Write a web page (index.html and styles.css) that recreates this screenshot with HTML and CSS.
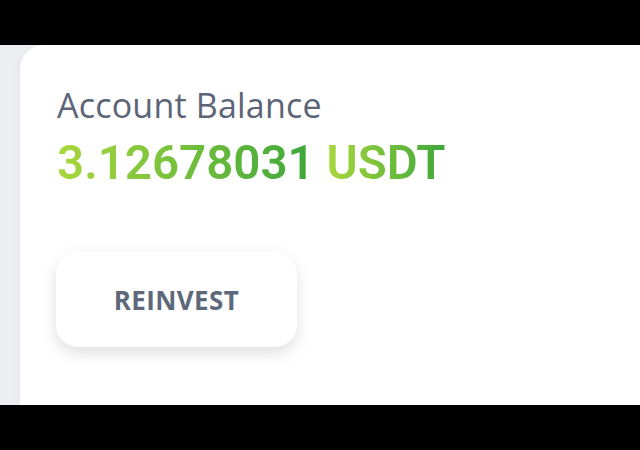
FILE: index.html
```html
<!DOCTYPE html>
<html lang="en">
<head>
    <meta charset="UTF-8">
    <meta name="viewport" content="width=device-width, initial-scale=1.0">
    <title>Account Balance</title>
    <link rel="stylesheet" href="styles.css">
</head>
<body>
    <div class="screen">
        <div class="card">
            <div class="balance-label">Account Balance</div>
            <div class="balance-value">
                <span class="grad">3.12678031</span> <span class="grad">USDT</span>
            </div>
            <button class="reinvest-btn">REINVEST</button>
        </div>
    </div>
</body>
</html>
```

FILE: styles.css
```css
body {
    margin: 0;
    padding: 45px 0;
    background-color: #000;
    font-family: 'Open Sans', sans-serif;
}
.screen {
    height: 360px;
    background: linear-gradient(90deg, #eceef1, #f4f5f7);
    padding-left: 20px;
    overflow: hidden;
}
.card {
    height: 100%;
    background: white;
    border-radius: 24px 0 0 0;
    box-shadow: -2px 0 8px rgba(0, 0, 0, 0.03);
    padding: 40px 0 0 37px;
    box-sizing: border-box;
}
.balance-label {
    font-size: 34px;
    line-height: 40px;
    color: #5b6576;
    letter-spacing: 0.2px;
}
.balance-value {
    margin-top: 13px;
    font-family: Roboto, sans-serif;
    font-weight: 600;
    font-size: 47.5px;
    line-height: 50px;
}
.grad {
    background: linear-gradient(90deg, #a9d73d, #3da63b);
    -webkit-background-clip: text;
    background-clip: text;
    color: transparent;
}
.reinvest-btn {
    margin-top: 64px;
    margin-left: -1px;
    width: 241px;
    height: 95px;
    border: none;
    border-radius: 22px;
    background: white;
    box-shadow: 0 6px 16px rgba(0, 0, 0, 0.13);
    font-family: 'Open Sans', sans-serif;
    font-weight: 700;
    font-size: 26px;
    letter-spacing: 0.4px;
    color: #5d687a;
    cursor: pointer;
}
```
